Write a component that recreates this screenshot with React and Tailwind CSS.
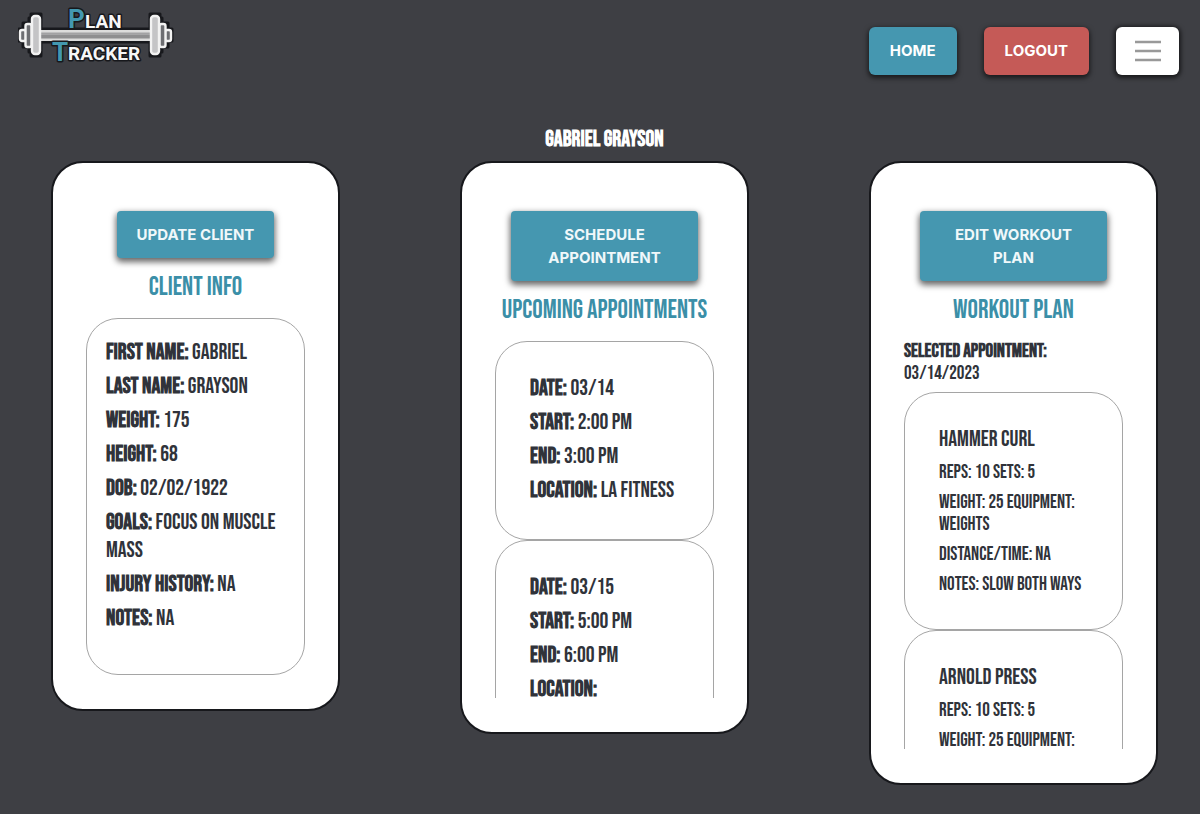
import React from "react";

const narrow = "font-['Bebas_Neue','Roboto_Condensed','Liberation_Sans_Narrow','Liberation_Sans',sans-serif]";

function Logo() {
  return (
    <svg viewBox="0 -7 156 70" className="h-[70px] w-[156px]" role="img" aria-label="Plan Tracker">
      <g stroke="#17181c" strokeWidth="3" fill="#17181c" strokeLinejoin="round">
        <path d="M1 22h4v-6h6v-5h2v-4h10v42H13v-4h-2v-5H5v-6H1z" />
        <path d="M154 22h-4v-6h-6v-5h-2v-4h-10v42h10v-4h2v-5h6v-6h4z" />
        <rect x="22" y="22" width="111" height="13" />
      </g>
      <rect x="22" y="23" width="111" height="11" fill="#dcdcdc" />
      <rect x="22" y="25.500" width="111" height="2" fill="#a2a2a4" />
      <rect x="22" y="27.500" width="111" height="4" fill="#8e8e90" />
      <g fill="#6d6e72" stroke="#f2f2f2" strokeWidth="2.400">
        <rect x="2" y="23" width="6" height="11" rx="2" />
        <rect x="7.500" y="17" width="6" height="23" rx="2" />
        <rect x="14" y="9" width="8" height="38" rx="3" fill="#c4c4c6" />
        <rect x="147" y="23" width="6" height="11" rx="2" />
        <rect x="141.500" y="17" width="6" height="23" rx="2" />
        <rect x="133" y="9" width="8" height="38" rx="3" fill="#c4c4c6" />
      </g>
      <g fontFamily="Roboto, sans-serif" fontWeight="700" stroke="#17181c" strokeWidth="3" paintOrder="stroke" strokeLinejoin="round">
        <text x="50" y="21" fontSize="26" fill="#4398b0">P</text>
        <text x="67" y="21" fontSize="19" fill="#f7f7f7">LAN</text>
        <text x="34" y="54" fontSize="26" fill="#4398b0">T</text>
        <text x="50" y="53" fontSize="19" fill="#f7f7f7">RACKER</text>
      </g>
    </svg>
  );
}

function Card({ action, title, note, children }) {
  return (
    <section className="flex flex-col items-center rounded-[32px] border-2 border-[#17181c] bg-white px-[33px] pt-12 pb-[34px]">
      <div className="flex w-full justify-center px-4">
        <button className="rounded bg-[#4597b0] px-5 pt-3 pb-3 font-['Inter',sans-serif] text-[15px] leading-[23px] font-bold text-[#f0f8fa] shadow-[0_3px_6px_1px_rgba(0,0,0,0.6)]">
          {action}
        </button>
      </div>
      <h2 className="mt-[15px] mb-[15px] text-[26px] leading-[30px] whitespace-nowrap text-[#3b8fa8]">{title}</h2>
      {note}
      <div className="h-[357px] w-full overflow-hidden">{children}</div>
    </section>
  );
}

function Field({ label, children }) {
  return (
    <p>
      <b>{label}:</b> {children}
    </p>
  );
}

function Appointment({ date, start, end, location }) {
  return (
    <li className="flex flex-col gap-[6px] rounded-[32px] border border-[#a5a5a5] px-[34px] pt-[33px] pb-[34px] text-[22px] leading-7 whitespace-nowrap">
      <Field label="DATE">{date}</Field>
      <Field label="START">{start}</Field>
      <Field label="END">{end}</Field>
      <Field label="LOCATION">{location}</Field>
    </li>
  );
}

function Exercise({ name, lines }) {
  return (
    <li className="flex flex-col gap-2 rounded-[32px] border border-[#a5a5a5] px-[34px] pt-[33px] pb-[33px] text-[19px] leading-[22px]">
      <h3 className="text-[22px] leading-7">{name}</h3>
      {lines.map((line) => (
        <p key={line}>{line}</p>
      ))}
    </li>
  );
}

export default function App() {
  const navButton = "h-12 rounded-md px-[21px] text-[15px] font-bold text-white shadow-[0_2px_5px_1px_rgba(0,0,0,0.6)]";
  return (
    <div className={`min-h-screen bg-[#3e3f44] pb-7 text-[#30333a] ${narrow}`}>
      <header className="flex items-start justify-between pr-[21px] pl-[18px]">
        <a href="#home">
          <Logo />
        </a>
        <nav className="flex gap-[27px] pt-[27px] font-['Inter',sans-serif]">
          <button className={`${navButton} bg-[#4597b0]`}>HOME</button>
          <button className={`${navButton} bg-[#c55a57]`}>LOGOUT</button>
          <button aria-label="Menu" className="flex h-12 w-[63px] items-center justify-center rounded-md bg-white shadow-[0_1px_4px_2px_rgba(0,0,0,0.6)]">
            <svg viewBox="0 0 28 24" className="h-6 w-7" stroke="#999" strokeWidth="2.500">
              <path d="M1 3h26M1 12h26M1 21h26" />
            </svg>
          </button>
        </nav>
      </header>

      <main className="pt-[51px] pr-[42px] pl-[51px]">
        <h1 className="mb-[7px] text-center text-[22px] leading-7 font-bold text-white">GABRIEL GRAYSON</h1>
        <div className="grid grid-cols-3 items-start gap-[120px]">
          <Card action="UPDATE CLIENT" title="CLIENT INFO">
            <div className="flex h-full flex-col gap-[6px] rounded-[32px] border border-[#a5a5a5] px-[19px] pt-5 text-[22px] leading-7">
              <Field label="FIRST NAME">GABRIEL</Field>
              <Field label="LAST NAME">GRAYSON</Field>
              <Field label="WEIGHT">175</Field>
              <Field label="HEIGHT">68</Field>
              <Field label="DOB">02/02/1922</Field>
              <Field label="GOALS">FOCUS ON MUSCLE MASS</Field>
              <Field label="INJURY HISTORY">NA</Field>
              <Field label="NOTES">NA</Field>
            </div>
          </Card>

          <Card action="SCHEDULE APPOINTMENT" title="UPCOMING APPOINTMENTS">
            <ul>
              <Appointment date="03/14" start="2:00 PM" end="3:00 PM" location="LA FITNESS" />
              <Appointment date="03/15" start="5:00 PM" end="6:00 PM" />
            </ul>
          </Card>

          <Card
            action="EDIT WORKOUT PLAN"
            title="WORKOUT PLAN"
            note={
              <p className="mb-[7px] w-full text-[19px] leading-[22px]">
                <b>SELECTED APPOINTMENT:</b>
                <br />
                03/14/2023
              </p>
            }
          >
            <ul>
              <Exercise
                name="HAMMER CURL"
                lines={["REPS: 10 SETS: 5", "WEIGHT: 25 EQUIPMENT: WEIGHTS", "DISTANCE/TIME: NA", "NOTES: SLOW BOTH WAYS"]}
              />
              <Exercise name="ARNOLD PRESS" lines={["REPS: 10 SETS: 5", "WEIGHT: 25 EQUIPMENT:"]} />
            </ul>
          </Card>
        </div>
      </main>
    </div>
  );
}
